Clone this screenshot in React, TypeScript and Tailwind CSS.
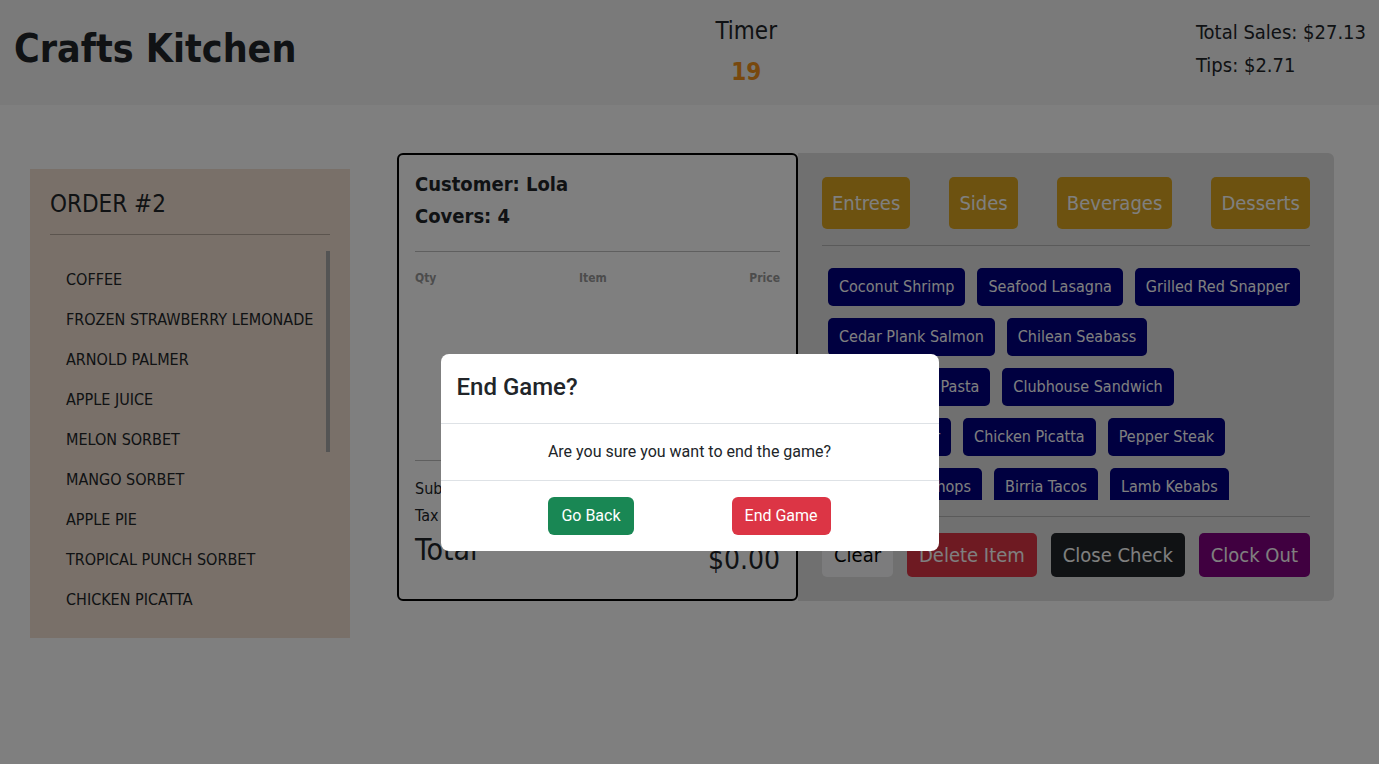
import React from 'react';

const tahoma = { fontFamily: '"DejaVu Sans Condensed", "DejaVu Sans", sans-serif' };

const orderItems = [
  'COFFEE',
  'FROZEN STRAWBERRY LEMONADE',
  'ARNOLD PALMER',
  'APPLE JUICE',
  'MELON SORBET',
  'MANGO SORBET',
  'APPLE PIE',
  'TROPICAL PUNCH SORBET',
  'CHICKEN PICATTA',
];

const categories = ['Entrees', 'Sides', 'Beverages', 'Desserts'];

// rows as the menu wraps them in the reference
const entreeRows = [
  ['Coconut Shrimp', 'Seafood Lasagna', 'Grilled Red Snapper'],
  ['Cedar Plank Salmon', 'Chilean Seabass'],
  ['Cajun Shrimp Pasta', 'Clubhouse Sandwich'],
  ['Cheeseburger', 'Chicken Picatta', 'Pepper Steak'],
  ['Grilled Pork Chops', 'Birria Tacos', 'Lamb Kebabs'],
];

const Header: React.FC = () => (
  <header className="h-[105px] bg-[#f4f4f4] px-[14px] flex justify-between items-start text-[#212529]" style={tahoma}>
    <h1 className="mt-[25px] text-[39px] leading-[48px] font-bold">Crafts Kitchen</h1>
    <div className="mt-[11px] flex flex-col items-center">
      <div className="text-[24px] leading-[40px]">Timer</div>
      <div className="mt-[1px] text-[24px] leading-[40px] font-bold text-[#f0901a]">19</div>
    </div>
    <div className="mt-[16px] mr-[-1px] text-[20px] leading-[33px]">
      <div>Total Sales: $27.13</div>
      <div>Tips: $2.71</div>
    </div>
  </header>
);

const OrderTicket: React.FC = () => (
  <div className="mt-[16px] w-[320px] h-[469px] bg-[#f3e1d2] px-[20px] pt-[19px] text-[#212529] shrink-0" style={tahoma}>
    <h2 className="text-[24px] leading-[32px]">ORDER #2</h2>
    <div className="mt-[14px] border-t border-black/25" />
    <div className="relative mt-[16px] h-[369px] overflow-hidden">
      <ul className="pt-[9px]">
        {orderItems.map((item) => (
          <li key={item} className="h-[40px] flex items-center pl-[16px] text-[16px]">
            {item}
          </li>
        ))}
      </ul>
      {/* scroll thumb */}
      <div className="absolute right-0 top-0 w-[4px] h-[201px] bg-[#a8a8a8]" />
    </div>
  </div>
);

const Receipt: React.FC = () => (
  <div className="ml-[47px] w-[401px] h-[448px] border-2 border-black rounded-[6px] bg-white px-[16px] pt-[13px] flex flex-col text-[#212529] shrink-0" style={tahoma}>
    <div className="text-[20px] leading-[32px] font-bold">
      <div>Customer: Lola</div>
      <div>Covers: 4</div>
    </div>
    <div className="mt-[19px] border-t border-[#bfbfbf]" />
    <div className="mt-[18px] flex justify-between text-[12px] leading-[16px] font-bold text-[#999999]">
      <span>Qty</span>
      <span>Item</span>
      <span>Price</span>
    </div>
    <div className="flex-1" />
    <div className="border-t border-[#bfbfbf]" />
    <div className="mt-[14px] text-[16px] leading-[27px]">
      <div className="flex justify-between">
        <span>Subtotal</span>
        <span>$0.00</span>
      </div>
      <div className="flex justify-between">
        <span>Tax</span>
        <span>$0.00</span>
      </div>
    </div>
    <div className="mt-[3px] mb-[21px] flex justify-between items-start">
      <span className="text-[30px] leading-[36px]">Total</span>
      <span className="mt-[10px] text-[28px] leading-[36px]">$0.00</span>
    </div>
  </div>
);

const MenuBoard: React.FC = () => (
  <div className="w-[536px] h-[448px] bg-[#e0e0e0] rounded-r-[6px] p-[24px] flex flex-col shrink-0" style={tahoma}>
    <div className="flex justify-between">
      {categories.map((c) => (
        <button key={c} className="h-[52px] px-[10px] rounded-[5px] bg-[#daa520] text-white text-[20px]">
          {c}
        </button>
      ))}
    </div>
    <div className="mt-[16px] border-t border-[#b5b5b5]" />
    <div className="mt-[16px] h-[238px] overflow-hidden p-[6px] flex flex-col gap-[12px]">
      {entreeRows.map((row, i) => (
        <div key={i} className="flex gap-[12px]">
          {row.map((e) => (
            <button key={e} className="h-[38px] px-[11px] rounded-[5px] bg-[#000080] text-white text-[16px] whitespace-nowrap">
              {e}
            </button>
          ))}
        </div>
      ))}
    </div>
    <div className="mt-[16px] border-t border-[#b5b5b5]" />
    <div className="mt-[16px] flex justify-between">
      <button className="h-[44px] px-[12px] rounded-[5px] bg-[#f8f9fa] text-black text-[20px]">Clear</button>
      <button className="h-[44px] px-[12px] rounded-[5px] bg-[#dc3545] text-white text-[20px]">Delete Item</button>
      <button className="h-[44px] px-[12px] rounded-[5px] bg-[#212529] text-white text-[20px]">Close Check</button>
      <button className="h-[44px] px-[12px] rounded-[5px] bg-[#800080] text-white text-[20px]">Clock Out</button>
    </div>
  </div>
);

const EndGameModal: React.FC = () => (
  <>
    <div className="fixed inset-0 bg-black/50" />
    <div
      className="fixed top-[354px] left-1/2 -translate-x-1/2 w-[498px] bg-white rounded-[8px] text-[#212529]"
      style={{ fontFamily: 'Roboto, "Liberation Sans", sans-serif' }}
    >
      <div className="h-[70px] px-[16px] pb-[4px] flex items-center border-b border-[#dee2e6]">
        <h5 className="text-[24px] font-medium">End Game?</h5>
      </div>
      <div className="h-[57px] flex items-center justify-center border-b border-[#dee2e6] text-[16px]">
        Are you sure you want to end the game?
      </div>
      <div className="h-[70px] flex items-center justify-center gap-[98px]">
        <button className="h-[38px] px-[13px] rounded-[6px] bg-[#198754] text-white text-[16px]">Go Back</button>
        <button className="h-[38px] px-[13px] rounded-[6px] bg-[#dc3545] text-white text-[16px]">End Game</button>
      </div>
    </div>
  </>
);

export default function App() {
  return (
    <div className="min-h-[764px] bg-white">
      <Header />
      <main className="pl-[30px] pt-[48px] flex items-start">
        <OrderTicket />
        <Receipt />
        <MenuBoard />
      </main>
      <EndGameModal />
    </div>
  );
}
